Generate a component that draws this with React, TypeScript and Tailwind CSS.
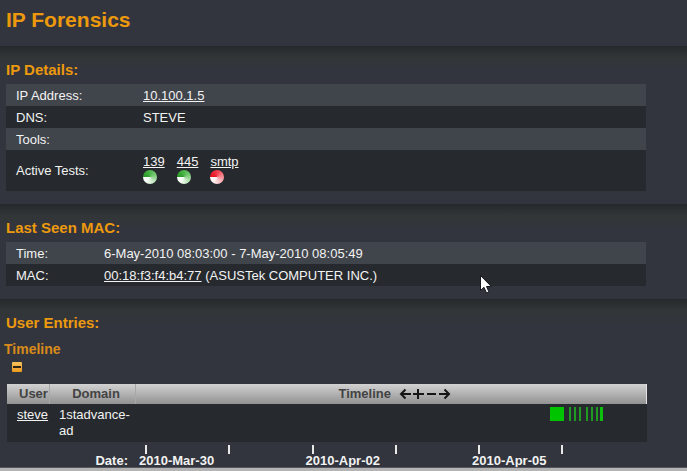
import type { ReactNode } from "react";

const days = ["2010-Mar-30", "", "2010-Apr-02", "", "2010-Apr-05", ""];
const stripes = [19, 24, 29, 36, 41, 46];

function Section({ title, children }: { title: string; children: ReactNode }) {
  return (
    <section className="bg-linear-to-b from-[#26292c] via-[#323637] via-[12px] to-[#32353d] to-[24px] pt-[15px]">
      <h2 className="pl-1.5 text-[15px] leading-[18px] font-bold text-[#ec990e]">{title}</h2>
      {children}
    </section>
  );
}

function Ball({ ok }: { ok: boolean }) {
  const tone = ok
    ? "bg-[conic-gradient(from_270deg,#279a25,#4db548_25%,#7ccb78_45%,#c5e8c2_65%,#f6fdf4_85%,#ffffff)]"
    : "bg-[conic-gradient(from_270deg,#e8101f,#f23a48_25%,#f67f88_45%,#fabcc0_65%,#fff0f0_85%,#ffffff)]";
  return <span role="img" aria-label={ok ? "passed" : "failed"} className={"mt-px block size-[14px] rounded-full " + tone} />;
}

const tests = [
  { name: "139", ok: true },
  { name: "445", ok: true },
  { name: "smtp", ok: false },
];

const tools = [
  { label: "Earlier", d: "M12 6H2M6.500 1.500L2 6L6.500 10.500" },
  { label: "Zoom in", d: "M1 6H12M6 1V11" },
  { label: "Zoom out", d: "M2 6H11" },
  { label: "Later", d: "M1 6H11M6.500 1.500L11 6L6.500 10.500" },
];

const rowClass = "h-[22px] odd:bg-[#40444b] even:bg-[#26292d] [&>*]:pt-0.5";
const labelClass = "pl-2.5 text-left font-normal";
const linkClass = "underline underline-offset-1";

export default function App() {
  return (
    <div className="relative flex h-screen flex-col overflow-hidden bg-[#32353d] font-['Liberation_Sans',Arial,sans-serif] text-[13px] leading-4 text-[#f3f3f3]">
      <main className="min-h-0 flex-1 overflow-hidden">
        <h1 className="px-1.5 pt-2 pb-3.5 text-[21px] leading-6 font-bold text-[#ec990e]">IP Forensics</h1>

        <Section title="IP Details:">
          <div className="pt-[5px] pr-[41px] pb-[13px] pl-1.5">
            <table className="w-full table-fixed border-collapse">
              <colgroup>
                <col className="w-[137px]" />
                <col />
              </colgroup>
              <tbody>
                <tr className={rowClass}>
                  <th className={labelClass}>IP Address:</th>
                  <td><a href="#ip" className={linkClass}>10.100.1.5</a></td>
                </tr>
                <tr className={rowClass}>
                  <th className={labelClass}>DNS:</th>
                  <td>STEVE</td>
                </tr>
                <tr className={rowClass}>
                  <th className={labelClass}>Tools:</th>
                  <td />
                </tr>
                <tr className="h-[41px] bg-[#26292d]">
                  <th className={labelClass}>Active Tests:</th>
                  <td>
                    <div className="flex gap-3 pb-1">
                      {tests.map((t) => (
                        <div key={t.name}>
                          <a href={"#" + t.name} className="block leading-[15px] underline underline-offset-1">{t.name}</a>
                          <Ball ok={t.ok} />
                        </div>
                      ))}
                    </div>
                  </td>
                </tr>
              </tbody>
            </table>
          </div>
        </Section>

        <Section title="Last Seen MAC:">
          <div className="pt-[5px] pr-[41px] pb-[13px] pl-1.5">
            <table className="w-full table-fixed border-collapse">
              <colgroup>
                <col className="w-[98px]" />
                <col />
              </colgroup>
              <tbody>
                <tr className={rowClass}>
                  <th className={labelClass}>Time:</th>
                  <td>6-May-2010 08:03:00 - 7-May-2010 08:05:49</td>
                </tr>
                <tr className={rowClass}>
                  <th className={labelClass}>MAC:</th>
                  <td>
                    <a href="#mac" className={linkClass}>00:18:f3:f4:b4:77</a> (ASUSTek COMPUTER INC.)
                  </td>
                </tr>
              </tbody>
            </table>
          </div>
        </Section>

        <Section title="User Entries:">
          <h3 className="mt-[9px] pl-1 text-[14px] leading-4 font-bold text-[#d98b1a]">Timeline</h3>
          <button type="button" aria-label="Collapse timeline" className="mt-[5px] ml-3 flex h-[10px] w-[10px] items-center justify-center rounded-[1px] bg-linear-to-b from-[#f7c25c] to-[#ee9a17]">
            <span className="h-[2px] w-2 bg-[#2b2414]" />
          </button>
          <div className="mt-3 pr-10 pl-[7px]">
            <table className="w-full table-fixed border-collapse">
              <colgroup>
                <col className="w-[42px]" />
                <col className="w-[86px]" />
                <col />
              </colgroup>
              <thead>
                <tr className="h-5 bg-linear-to-b from-[#d2d2d2] to-[#929292] text-[#434343]">
                  <th className="border-r border-[#a8a8a8] pl-3 text-left">User</th>
                  <th className="border-r border-[#a8a8a8] pl-2">Domain</th>
                  <th className="border-r border-[#e2e2e2]">
                    <div className="flex items-center justify-center gap-2 pl-2">
                      Timeline
                      <span className="flex">
                        {tools.map((t) => (
                          <button key={t.label} type="button" aria-label={t.label}>
                            <svg className="block h-3 w-[13px]" viewBox="0 0 13 12" fill="none" stroke="#151515" strokeWidth="2">
                              <path d={t.d} />
                            </svg>
                          </button>
                        ))}
                      </span>
                    </div>
                  </th>
                </tr>
              </thead>
              <tbody>
                <tr className="h-[38px] bg-[#26292d] align-top">
                  <td className="pt-[3px] pl-2.5"><a href="#steve" className={linkClass}>steve</a></td>
                  <td className="pt-[3px] pl-2.5">1stadvance-<br />ad</td>
                  <td className="pt-[3px] pr-[43px]">
                    <svg role="img" aria-label="Activity" className="ml-auto block h-[14px] w-[54px]" viewBox="0 0 54 14">
                      <rect width="14" height="14" fill="#00c400" />
                      {stripes.map((x) => (
                        <rect key={x} x={x} width="2" height="14" fill="#1f9a22" />
                      ))}
                      <rect x="50" width="3" height="14" fill="#0cbf0c" />
                    </svg>
                  </td>
                </tr>
              </tbody>
              <tfoot>
                <tr className="align-bottom leading-3 text-[#f3f3f3]">
                  <th colSpan={2} className="pr-[7px] text-right">Date:</th>
                  <td className="pt-[3px] pr-2 pl-1">
                    <div className="grid grid-cols-6">
                      {days.map((d, i) => (
                        <div key={i} className="font-bold whitespace-nowrap">
                          <span className="mb-px ml-1.5 block h-[9px] w-[2px] bg-[#e8e8e8]" />
                          <span className="block h-3">{d}</span>
                        </div>
                      ))}
                    </div>
                  </td>
                </tr>
              </tfoot>
            </table>
          </div>
        </Section>
      </main>
      <div className="h-1 shrink-0 border-t border-[#55575c] bg-[#b4b4b4]" />

      <svg className="absolute top-[275px] left-[480px] h-[19px] w-3" viewBox="0 0 12 19" aria-hidden="true">
        <path d="M.5.500V15.500L4 12.300L6.500 18L9 17L6.500 11.500H11.300Z" fill="#fff" stroke="#15181c" />
      </svg>
    </div>
  );
}
